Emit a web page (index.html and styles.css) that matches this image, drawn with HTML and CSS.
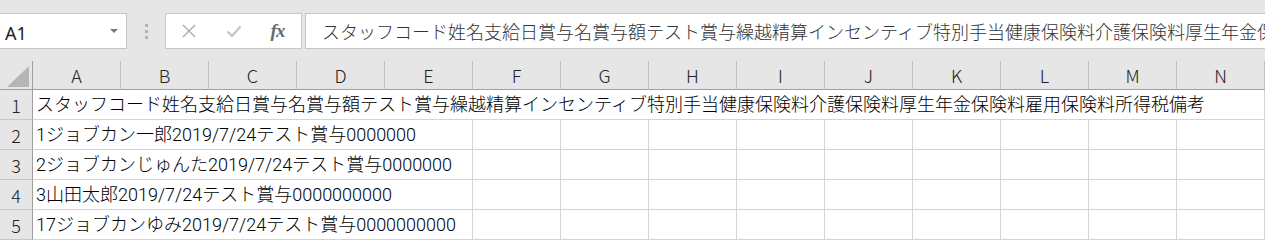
FILE: index.html
```html
<!DOCTYPE html>
<html lang="ja">
<head>
<meta charset="utf-8">
<title>Excel</title>
<link rel="stylesheet" href="styles.css">
</head>
<body>
<div class="toolbar">
  <div class="namebox">
    <span class="ref">A1</span>
    <svg class="caret" width="8" height="4" viewBox="0 0 8 4"><path d="M0 0H8L4 4Z" fill="#7a7a7a"/></svg>
  </div>
  <div class="dots"><i></i><i></i><i></i></div>
  <div class="fxbox">
    <span class="slot"><svg width="16" height="16" viewBox="0 0 16 16"><path d="M2 2L14 14M14 2L2 14" stroke="#ababab" stroke-width="1.4" fill="none"/></svg></span>
    <span class="slot"><svg width="16" height="16" viewBox="0 0 16 16"><path d="M1.5 8.5L6 13L14.5 3.5" stroke="#c4c4c4" stroke-width="2.2" fill="none"/></svg></span>
    <span class="slot fx">fx</span>
  </div>
  <div class="formula">スタッフコード姓名支給日賞与名賞与額テスト賞与繰越精算インセンティブ特別手当健康保険料介護保険料厚生年金保険料雇用保険料所得税備考</div>
</div>
<div class="sheet">
  <div class="corner"><span class="tri"></span></div>
  <div class="ch">A</div><div class="ch">B</div><div class="ch">C</div><div class="ch">D</div><div class="ch">E</div><div class="ch">F</div><div class="ch">G</div><div class="ch">H</div><div class="ch">I</div><div class="ch">J</div><div class="ch">K</div><div class="ch">L</div><div class="ch">M</div><div class="ch">N</div>

  <div class="rh">1</div>
  <div class="c span14">スタッフコード姓名支給日賞与名賞与額テスト賞与繰越精算インセンティブ特別手当健康保険料介護保険料厚生年金保険料雇用保険料所得税備考</div>

  <div class="rh">2</div>
  <div class="c span5">1ジョブカン一郎2019/7/24テスト賞与0000000</div>
  <div class="c"></div><div class="c"></div><div class="c"></div><div class="c"></div><div class="c"></div><div class="c"></div><div class="c"></div><div class="c"></div><div class="c"></div>

  <div class="rh">3</div>
  <div class="c span5">2ジョブカンじゅんた2019/7/24テスト賞与0000000</div>
  <div class="c"></div><div class="c"></div><div class="c"></div><div class="c"></div><div class="c"></div><div class="c"></div><div class="c"></div><div class="c"></div><div class="c"></div>

  <div class="rh">4</div>
  <div class="c span5">3山田太郎2019/7/24テスト賞与0000000000</div>
  <div class="c"></div><div class="c"></div><div class="c"></div><div class="c"></div><div class="c"></div><div class="c"></div><div class="c"></div><div class="c"></div><div class="c"></div>

  <div class="rh">5</div>
  <div class="c span5">17ジョブカンゆみ2019/7/24テスト賞与0000000000</div>
  <div class="c"></div><div class="c"></div><div class="c"></div><div class="c"></div><div class="c"></div><div class="c"></div><div class="c"></div><div class="c"></div><div class="c"></div>
</div>
</body>
</html>
```
FILE: styles.css
```css
* { box-sizing: border-box; }
html, body {
  margin: 0;
  padding: 0;
  width: 1265px;
  height: 241px;
  overflow: hidden;
  background: #ffffff;
  font-family: "Noto Sans CJK JP", "Noto Sans", sans-serif;
}

.toolbar {
  height: 61px;
  background: #e6e6e6;
  display: flex;
  align-items: flex-start;
  padding-top: 13px;
}

.namebox {
  width: 127px;
  height: 36px;
  background: #fff;
  border: 1px solid #c6c6c6;
  border-left: none;
  display: flex;
  align-items: center;
  justify-content: space-between;
  padding: 0 8px 0 5px;
}
.ref {
  font-family: "Noto Sans", sans-serif;
  font-size: 18px;
  color: #222;
  line-height: 1;
  margin-top: 3px;
}
.caret { display: block; }

.dots {
  width: 38px;
  height: 36px;
  display: flex;
  flex-direction: column;
  align-items: center;
  justify-content: center;
  gap: 3px;
}
.dots i {
  display: block;
  width: 3px;
  height: 3px;
  background: #b3b3b3;
}

.fxbox {
  width: 137px;
  height: 36px;
  background: #fff;
  border: 1px solid #c6c6c6;
  display: flex;
}
.slot {
  width: 45px;
  display: flex;
  align-items: center;
  justify-content: center;
}
.slot svg { display: block; }
.fx {
  font-family: "Liberation Serif", serif;
  font-style: italic;
  font-weight: bold;
  font-size: 19px;
  color: #6a6a6a;
  letter-spacing: -1px;
  padding-right: 2px;
}

.formula {
  flex: 1;
  height: 36px;
  margin-left: 3px;
  background: #fff;
  border: 1px solid #c6c6c6;
  border-right: none;
  padding-left: 16px;
  font-size: 18px;
  font-weight: 300;
  color: #333;
  line-height: 34px;
  white-space: nowrap;
  overflow: hidden;
}

.sheet {
  display: grid;
  grid-template-columns: 33px repeat(14, 88px);
  grid-template-rows: 29px repeat(5, 30px);
}

.corner {
  background: #e6e6e6;
  border-right: 1px solid #9f9f9f;
  border-bottom: 1px solid #9f9f9f;
  display: flex;
  align-items: flex-end;
  justify-content: flex-end;
  padding: 0 3px 2px 0;
}
.tri {
  width: 0;
  height: 0;
  border-left: 22px solid transparent;
  border-bottom: 21px solid #b5b5b5;
}

.ch {
  background: #e6e6e6;
  border-right: 1px solid #c2c2c2;
  border-bottom: 1px solid #9f9f9f;
  font-size: 18px;
  font-weight: 300;
  color: #222;
  display: flex;
  align-items: center;
  justify-content: center;
  line-height: 1;
}

.rh {
  background: #e6e6e6;
  border-right: 1px solid #9f9f9f;
  border-bottom: 1px solid #c8c8c8;
  font-size: 18px;
  font-weight: 300;
  color: #222;
  display: flex;
  align-items: center;
  justify-content: center;
  line-height: 1;
}

.c {
  border-right: 1px solid #d4d4d4;
  border-bottom: 1px solid #d4d4d4;
  font-family: "Roboto", "Noto Sans CJK JP", sans-serif;
  font-size: 18px;
  font-weight: 300;
  color: #000;
  padding-left: 3px;
  line-height: 29px;
  white-space: nowrap;
  overflow: visible;
}
.span5 { grid-column: span 5; }
.span14 { grid-column: span 14; }
```
